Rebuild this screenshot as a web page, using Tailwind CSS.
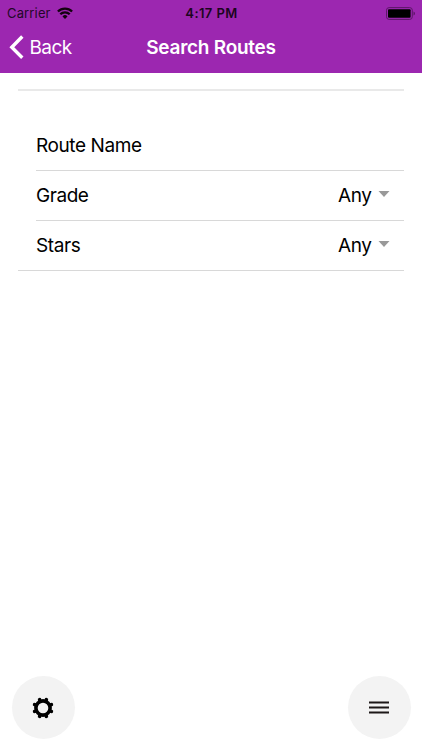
<!DOCTYPE html>
<html lang="en">
<head>
<meta charset="utf-8">
<title>Search Routes</title>
<script src="https://cdn.jsdelivr.net/npm/@tailwindcss/browser@4"></script>
</head>
<body class="bg-white text-black font-['Inter',sans-serif]">
<div class="w-[422px] h-[750px] flex flex-col overflow-hidden">
  <header class="h-[73px] shrink-0 bg-[#9c27b0]">
    <div class="h-[25px] grid grid-cols-3 items-center pl-[7px] pr-[6px] text-[13px] leading-[25px]">
      <div class="flex items-center gap-[6px]">
        <span class="text-[#230728] tracking-[0.15px] pt-px">Carrier</span>
        <svg class="w-4 h-3" viewBox="0 0 16 12" fill="none" stroke="#12020f" stroke-width="2.3">
          <path d="M0.9 4.5a10.2 10.2 0 0 1 14.2 0"/>
          <path d="M3.3 7.3a6.6 6.6 0 0 1 9.4 0"/>
          <path d="M8 11.9L5.5 9.4a3.5 3.5 0 0 1 5 0z" fill="#12020f" stroke="none"/>
        </svg>
      </div>
      <span class="text-center font-semibold text-[#1b0520] tracking-[0.4px] pt-px">4:17 PM</span>
      <svg class="justify-self-end w-[30px] h-[13px]" viewBox="0 0 30 13">
        <rect x="0.5" y="0.6" width="25.8" height="11.8" rx="2.6" fill="none" stroke="#5c1768" stroke-width="1"/>
        <rect x="2" y="2.3" width="22.6" height="8.4" rx="1" fill="#000"/>
        <path d="M27.5 4.5q1.5 .6 1.5 2t-1.5 2z" fill="#5c1768"/>
      </svg>
    </div>
    <div class="h-[45px] grid grid-cols-[120px_1fr_120px] items-center text-white">
      <div class="flex items-center pl-[8.5px] gap-[6px]">
        <svg class="w-[15px] h-[25px]" viewBox="0 0 15 25" fill="none" stroke="#fff" stroke-width="3.4"><path d="M13.3 1.5L2.8 12.2l10.5 10.5"/></svg>
        <span class="text-[19px] leading-6 tracking-[-0.6px] pt-px">Back</span>
      </div>
      <h1 class="text-center text-[19px] leading-6 font-semibold tracking-[-0.25px] whitespace-nowrap pt-px">Search Routes</h1>
    </div>
  </header>
  <main class="flex-1 pl-[18px] pr-[18px] pt-4 text-[19px]">
    <div class="h-[2px] bg-[#e9e9e9]"></div>
    <div class="pl-[18px] pt-[30px]">
      <div class="h-[50px] flex items-center border-b border-[#d8d8d8] pt-[2px] tracking-[-0.42px]">Route Name</div>
      <div class="h-[50px] flex items-center justify-between border-b border-[#d8d8d8] pt-[2px] pr-[14.5px] tracking-[-0.45px]">
        <span>Grade</span>
        <span class="flex items-center gap-[6px]">Any<svg class="w-3 h-[6px] mb-[6px]" viewBox="0 0 12 6"><path d="M.5 0h11L6 6z" fill="#999"/></svg></span>
      </div>
      <div class="h-[49px] flex items-center justify-between pt-[2px] pr-[14.5px] tracking-[-0.4px]">
        <span>Stars</span>
        <span class="flex items-center gap-[6px]">Any<svg class="w-3 h-[6px] mb-[6px]" viewBox="0 0 12 6"><path d="M.5 0h11L6 6z" fill="#999"/></svg></span>
      </div>
    </div>
    <div class="h-px bg-[#d8d8d8]"></div>
  </main>
  <footer class="flex justify-between pl-[11.5px] pr-[11.5px] pb-[11px]">
    <button class="size-[63px] rounded-full bg-[#f3f3f3] flex items-center justify-center" aria-label="Settings">
      <svg class="size-[22px]" viewBox="-11 -11 22 22">
        <circle r="7.1" fill="none" stroke="#000" stroke-width="3.6"/>
        <g stroke="#000" stroke-width="3.6" stroke-linecap="round">
          <path d="M3.1-7.5L3.4-8.4M7.5-3.1L8.4-3.4M7.5 3.1L8.4 3.4M3.1 7.5L3.4 8.4M-3.1 7.5L-3.4 8.4M-7.5 3.1L-8.4 3.4M-7.5-3.1L-8.4-3.4M-3.1-7.5L-3.4-8.4"/>
        </g>
      </svg>
    </button>
    <button class="size-[63px] rounded-full bg-[#f3f3f3] flex items-center justify-center" aria-label="Menu">
      <svg class="w-5 h-[13px] mr-px" viewBox="0 0 20 13"><path d="M0 1.5h20M0 6.5h20M0 11.5h20" stroke="#1c1717" stroke-width="2"/></svg>
    </button>
  </footer>
</div>
</body>
</html>
